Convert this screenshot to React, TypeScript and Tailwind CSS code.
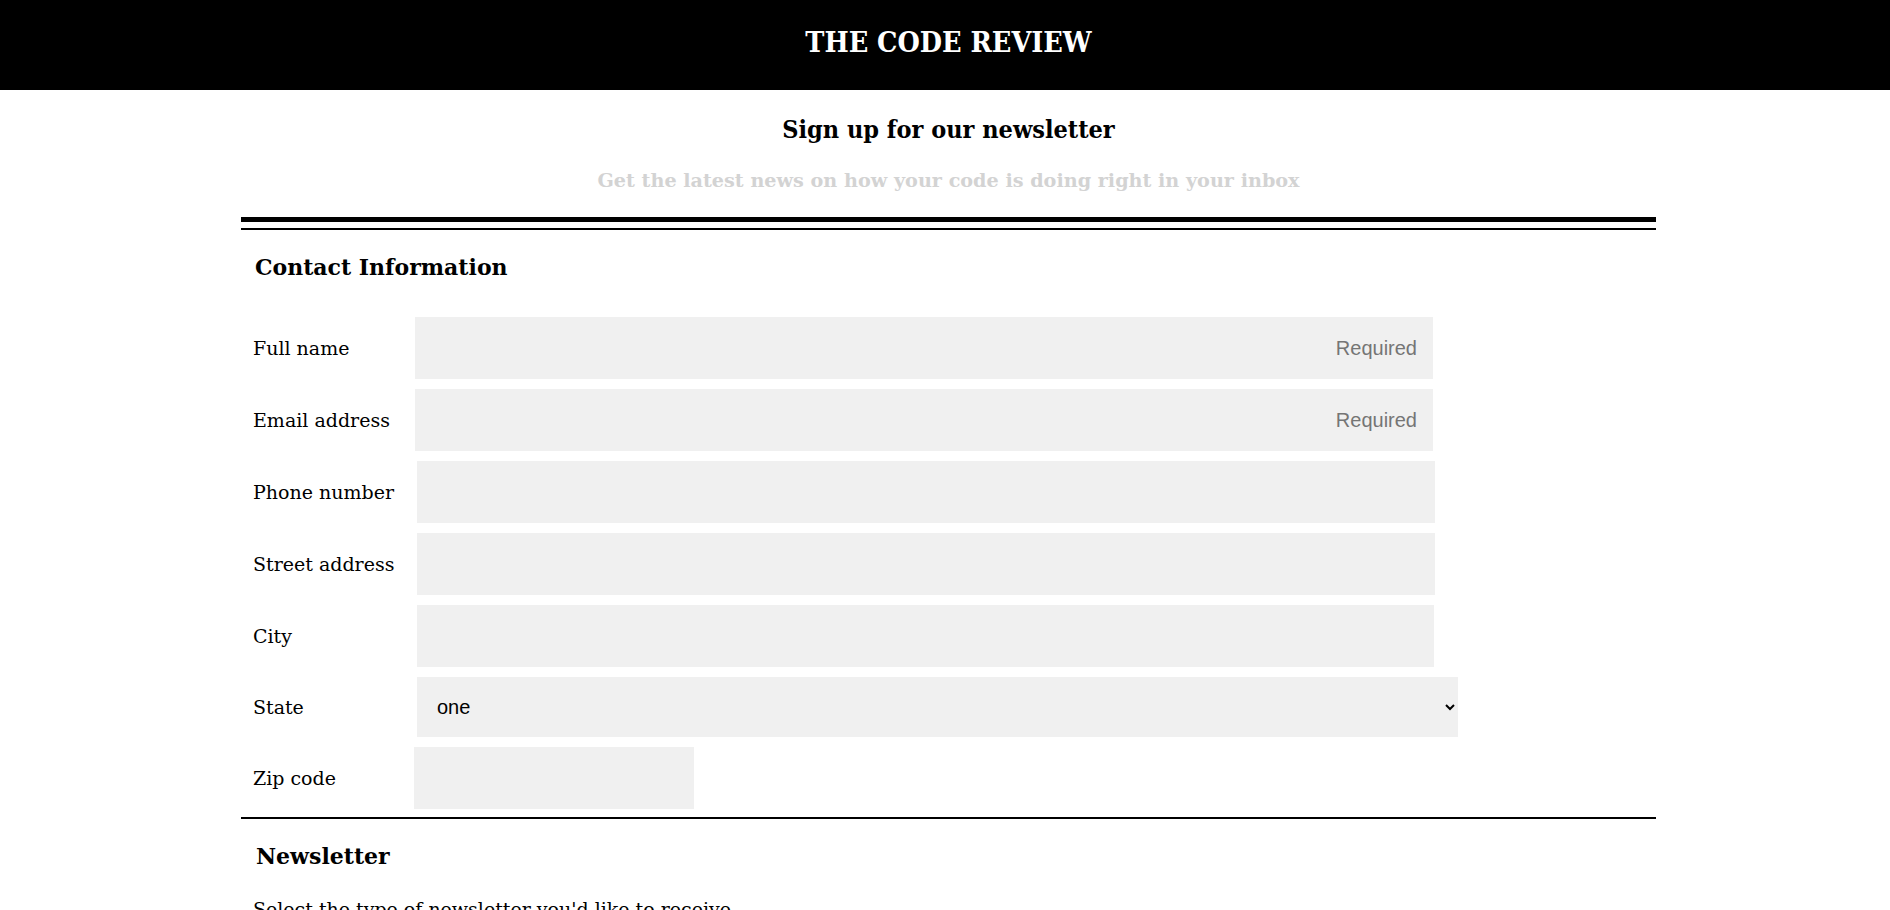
import { FC } from 'react';

const serif = "font-['DejaVu_Serif',serif]";
const serifNarrow = "font-['DejaVu_Serif_Condensed','DejaVu_Serif',serif] [font-stretch:condensed]";

interface FieldRowProps {
  label: string;
  inputClass: string;
  placeholder?: string;
}

const FieldRow: FC<FieldRowProps> = ({ label, inputClass, placeholder }) => {
  return (
    <div className="flex items-center h-[62px]">
      <label className={`${serif} w-[162px] shrink-0 text-[19px] leading-[20px] text-black`}>{label}</label>
      <input
        type="text"
        placeholder={placeholder}
        className={`h-[62px] bg-[#f0f0f0] border-0 outline-none text-right pr-4 font-['Liberation_Sans',Arial,sans-serif] text-[20px] placeholder:text-[#757575] ${inputClass}`}
      />
    </div>
  );
};

const App: FC = () => {
  return (
    <div className="min-h-[910px] bg-white text-black">
      <header className="h-[90px] bg-black pl-[7px] pt-[28px]">
        <h1 className={`${serifNarrow} text-center text-white font-bold text-[28.5px] leading-[28px]`}>THE CODE REVIEW</h1>
      </header>

      <div className="pl-[7px]">
        <h2 className={`${serifNarrow} mt-[27px] text-center font-bold text-[25px] leading-[26px]`}>Sign up for our newsletter</h2>
        <p className={`${serif} mt-[28px] text-center font-bold text-[19.2px] leading-[20px] text-[#d3d3d3]`}>
          Get the latest news on how your code is doing right in your inbox
        </p>

        <div className="w-[1415px] mx-auto">
          <div className="mt-[26px] h-[5px] bg-black" />
          <div className="mt-[6px] h-[2px] bg-black" />

          <section className="pl-3">
            <h3 className={`${serif} mt-[26px] pl-[2px] font-bold text-[22px] leading-[22px]`}>Contact Information</h3>
            <div className="mt-[39px] flex flex-col gap-[10px]">
              <FieldRow label="Full name" placeholder="Required" inputClass="w-[1018px]" />
              <FieldRow label="Email address" placeholder="Required" inputClass="w-[1018px]" />
              <FieldRow label="Phone number" inputClass="ml-[2px] w-[1018px]" />
              <FieldRow label="Street address" inputClass="ml-[2px] w-[1018px]" />
              <FieldRow label="City" inputClass="ml-[2px] w-[1017px]" />
              <div className="flex items-center h-[60px]">
                <label className={`${serif} w-[164px] shrink-0 text-[19px] leading-[20px]`}>State</label>
                <select className="h-[60px] w-[1041px] bg-[#f0f0f0] border-0 outline-none pl-4 font-['Liberation_Sans',Arial,sans-serif] text-[20px] text-black">
                  <option>one</option>
                  <option>two</option>
                  <option>three</option>
                </select>
              </div>
              <FieldRow label="Zip code" inputClass="-ml-[1px] w-[280px]" />
            </div>
          </section>

          <div className="mt-[8px] h-[2px] bg-black" />

          <section className="pl-3">
            <h3 className={`${serif} mt-[26px] pl-[3px] font-bold text-[22px] leading-[22px]`}>Newsletter</h3>
            <p className={`${serif} mt-[32px] text-[19px] leading-[20px]`}>Select the type of newsletter you'd like to receive.</p>
          </section>
        </div>
      </div>
    </div>
  );
};

export default App;
